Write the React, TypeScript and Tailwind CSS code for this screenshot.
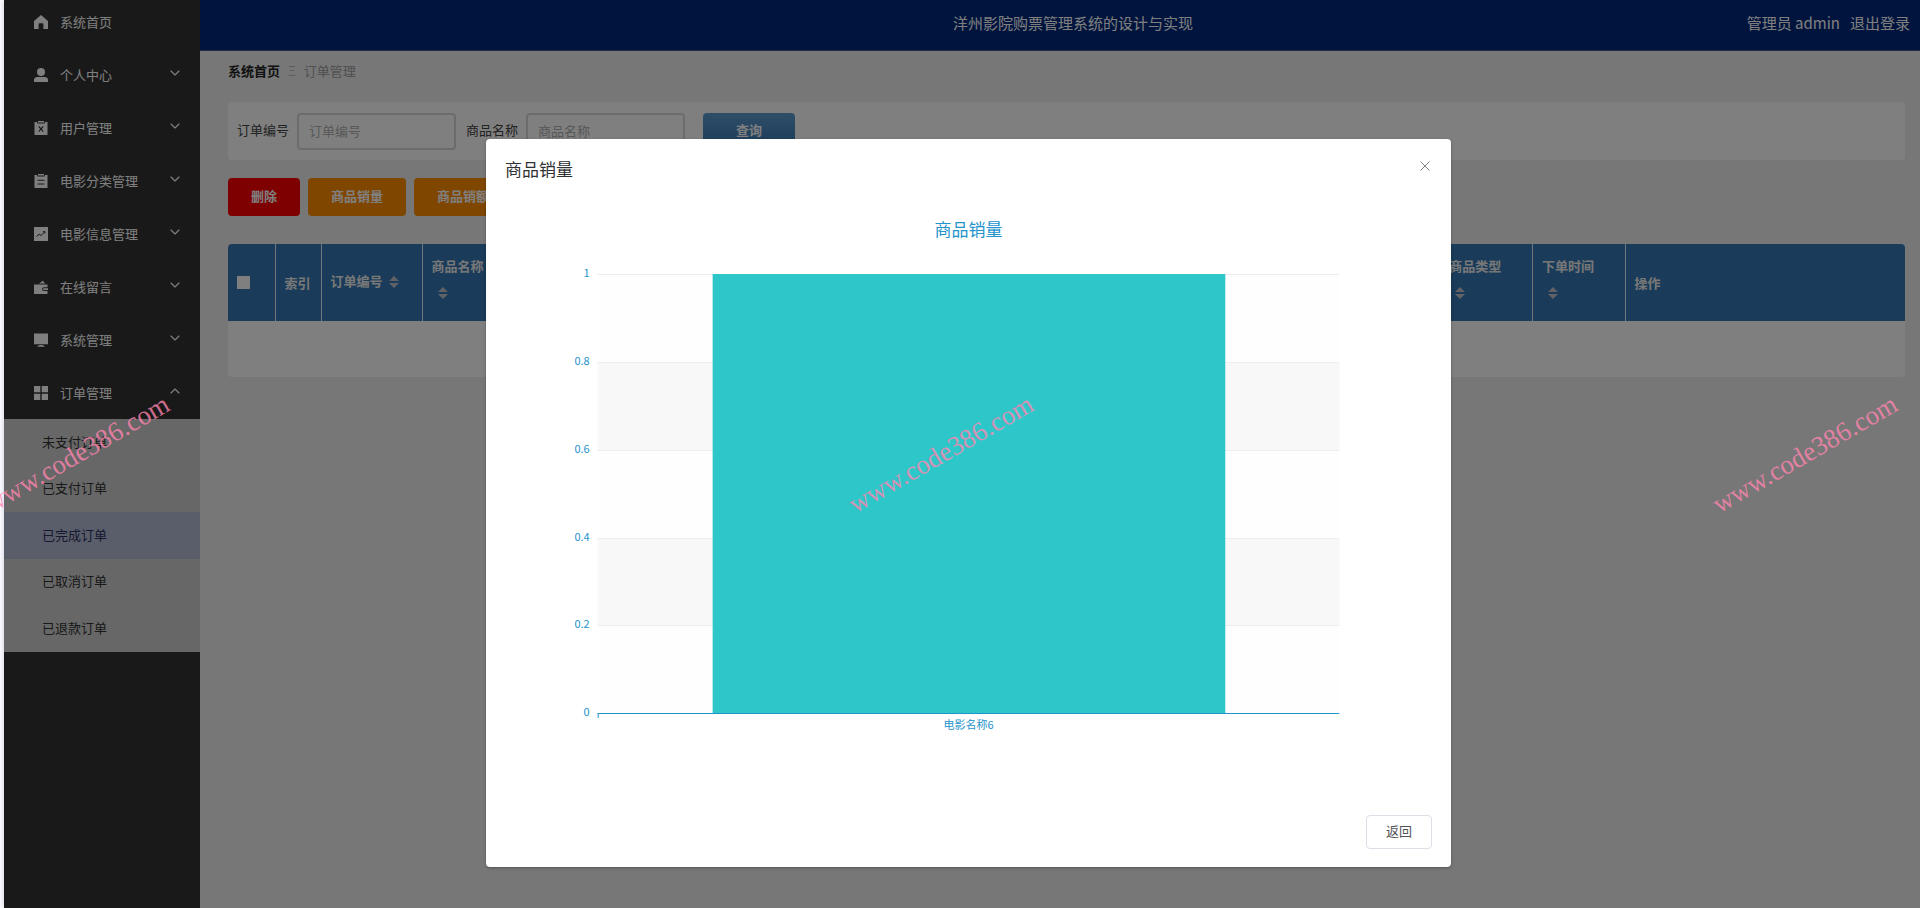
import React from "react";
import { ChevronDown, ChevronUp } from "lucide-react";

const icons = {
    home: <path d="M7 0 0 6v8h4.6V9.2a1 1 0 0 1 1-1h2.8a1 1 0 0 1 1 1V14H14V6z" />,
    user: (
        <>
            <circle cx="7" cy="4" r="4" />
            <path d="M0 14v-1.8C0 10.2 1.400 9 3.400 9h7.200c2 0 3.400 1.200 3.400 3.200V14z" />
        </>
    ),
    release: (
        <path
            fillRule="evenodd"
            d="M4 0h6v1.500H4zM.5 1h2.700v1.500h7.600V1h2.700v13H.5zM4.300 5.800 6.200 7.900 4.300 10.200l.8.7L7 8.700l1.900 2.200.8-.7-1.900-2.300 1.900-2.100-.8-.7L7 7.100 5.100 5.100z"
        />
    ),
    order: (
        <path
            fillRule="evenodd"
            d="M4 0h6v1.500H4zM.5 1h2.700v1.500h7.600V1h2.700v13H.5zM3.500 5.800v1h7v-1zM3.500 9.500v1h7v-1z"
        />
    ),
    marketing: (
        <>
            <path d="M0 0h14v14H0z" />
            <path d="m2.500 9.500 2.700-2.300 2 1.400L10.500 5M9 4.600h2v1.800" fill="none" stroke="#333333" />
        </>
    ),
    finance: (
        <path
            fillRule="evenodd"
            d="M5 3.500 8.800.8l2.500 2.700zM0 4.500h13.500v2.700H10a1.900 1.900 0 0 0 0 3.800h3.500V14H0zM10 8.200h4v1.900h-4a.9.9 0 0 1 0-1.900z"
        />
    ),
    platform: <path d="M0 .5h14v10.700H0zM5 11.900h4v.8h1.500v1h-7v-1H5z" />,
    menu: <path d="M0 0h6.300v6.300H0zM7.700 0H14v6.300H7.700zM0 7.700h6.300V14H0zM7.700 7.700H14V14H7.700z" />,
};

const menus = [
    { title: "个人中心", icon: icons.user },
    { title: "用户管理", icon: icons.release },
    { title: "电影分类管理", icon: icons.order },
    { title: "电影信息管理", icon: icons.marketing },
    { title: "在线留言", icon: icons.finance },
    { title: "系统管理", icon: icons.platform },
    { title: "订单管理", icon: icons.menu, open: true },
];

const orderMenus = ["未支付订单", "已支付订单", "已完成订单", "已取消订单", "已退款订单"];

const columns = [
    "商品名称",
    "商品图片",
    "购买数量",
    "商品价格",
    "折扣价格",
    "商品总价",
    "折扣总价",
    "支付类型",
    "收货地址",
    "联系电话",
    "收货人名",
    "商品类型",
    "下单时间",
];

const ticks = [
    { label: "1", y: 60 },
    { label: "0.8", y: 148 },
    { label: "0.6", y: 236 },
    { label: "0.4", y: 324 },
    { label: "0.2", y: 411 },
    { label: "0", y: 499 },
];

function MenuIcon({ children }: { children: React.ReactNode }) {
    return (
        <svg viewBox="0 0 14 14" className="w-3.5 h-3.5 shrink-0" fill="currentColor">
            {children}
        </svg>
    );
}

function SortCaret() {
    return (
        <span className="inline-flex w-[22px] h-[26px] items-center justify-center align-middle">
            <svg viewBox="0 0 10 12" className="w-2.5 h-3" fill="#c0c4cc">
                <path d="M5 0 10 5H0zM5 12 0 7h10z" />
            </svg>
        </span>
    );
}

function Sidebar() {
    return (
        <nav className="w-[196px] shrink-0 bg-[#333333] text-white shadow-[0_0_6px_rgba(80,90,160,0.35)]">
            <a href="#home" className="flex h-12 items-center gap-3 pb-1 pl-[30px]">
                <MenuIcon>{icons.home}</MenuIcon>
                系统首页
            </a>
            {menus.map((menu) => (
                <button key={menu.title} className="flex h-[53px] w-full items-center gap-3 pl-[30px] pr-[17px]">
                    <MenuIcon>{menu.icon}</MenuIcon>
                    <span className="flex-1 text-left">{menu.title}</span>
                    {menu.open ? (
                        <ChevronUp className="w-4 h-4 mb-1" strokeWidth={1.75} />
                    ) : (
                        <ChevronDown className="w-4 h-4 mb-1" strokeWidth={1.75} />
                    )}
                </button>
            ))}
            <div className="grid h-[233px] grid-rows-5 bg-[#cfcfcf] text-[#333333]">
                {orderMenus.map((title, i) => (
                    <a
                        key={title}
                        href="#orders"
                        className={`flex items-center pb-0.5 pl-[38px] ${i === 2 ? "bg-[#b4bad4] text-[#2a3260]" : ""}`}
                    >
                        {title}
                    </a>
                ))}
            </div>
        </nav>
    );
}

function SearchField({ id, label }: { id: string; label: string }) {
    return (
        <div className="flex items-center gap-2">
            <label htmlFor={id} className="pb-0.5">
                {label}
            </label>
            <input
                id={id}
                placeholder={label}
                className="h-[37px] w-[159px] rounded border-2 border-[#d8d8d8] bg-white px-2.5 pb-0.5 placeholder:text-[#b0b0b0]"
            />
        </div>
    );
}

function OrderTable() {
    return (
        <table className="mt-7 w-full table-fixed overflow-hidden rounded bg-white text-left">
            <colgroup>
                <col className="w-[47px]" />
                <col className="w-[46px]" />
                <col className="w-[101px]" />
                {columns.map((name) => (
                    <col key={name} />
                ))}
                <col className="w-[280px]" />
            </colgroup>
            <thead>
                <tr className="h-[77px] bg-[#3478b4] leading-[26px] text-[#f0f0f0] [&>th]:border-r [&>th]:border-[#e8eef4] [&>th]:px-[9px]">
                    <th>
                        <input
                            type="checkbox"
                            aria-label="全选"
                            className="block h-[13px] w-[13px] appearance-none bg-white"
                        />
                    </th>
                    <th>索引</th>
                    <th className="whitespace-nowrap pb-0.5">
                        订单编号
                        <SortCaret />
                    </th>
                    {columns.map((name) => (
                        <th key={name} className="pb-1.5">
                            {name}
                            <SortCaret />
                        </th>
                    ))}
                    <th className="!border-r-0">操作</th>
                </tr>
            </thead>
            <tbody>
                <tr className="h-14">
                    <td colSpan={17} />
                </tr>
            </tbody>
        </table>
    );
}

function SalesChart() {
    return (
        <svg className="block h-[560px] w-full" fill="#2493cb" fontSize="11" role="img" aria-label="商品销量">
            <text x="50%" y="22" fontSize="17" textAnchor="middle">
                商品销量
            </text>
            <rect x="10%" y="60" width="80%" height="439" fill="#fefefe" />
            <rect x="10%" y="148" width="80%" height="88" fill="#f8f8f8" />
            <rect x="10%" y="324" width="80%" height="88" fill="#f8f8f8" />
            {ticks.map((tick) => (
                <g key={tick.label}>
                    <rect x="10%" y={tick.y} width="80%" height="1" fill="#eeeeee" />
                    <svg x="10%" y={tick.y} overflow="visible">
                        <text x="-8" y="3" textAnchor="end">
                            {tick.label}
                        </text>
                    </svg>
                </g>
            ))}
            <rect x="22.4%" y="60" width="55.3%" height="439" fill="#2ec7c9" />
            <rect x="10%" y="499" width="80%" height="1" />
            <rect x="10%" y="499" width="1" height="5" />
            <text x="50%" y="515" textAnchor="middle">
                电影名称6
            </text>
        </svg>
    );
}

function SalesDialog() {
    return (
        <div className="absolute inset-y-0 left-1 right-0 flex items-start justify-center bg-black/50 pl-[13px]">
            <div
                role="dialog"
                aria-label="商品销量"
                className="mt-[139px] w-[965px] max-w-full rounded-sm bg-white px-[19px] pb-[18px] shadow-[0_1px_3px_rgba(0,0,0,0.3)]"
            >
                <div className="flex h-[75px] items-start justify-between pt-[18px]">
                    <h2 className="text-[17px] leading-6 text-[#303133]">商品销量</h2>
                    <button aria-label="关闭" className="mr-0.5 mt-1 text-[#808388]">
                        <svg viewBox="0 0 10 10" className="h-2.5 w-2.5" fill="none" stroke="currentColor">
                            <path d="m.5.5 9 9M9.500.5l-9 9" />
                        </svg>
                    </button>
                </div>
                <SalesChart />
                <div className="mt-[41px] flex justify-end">
                    <button className="h-[34px] rounded border border-[#dcdfe6] px-[19px] pb-0.5 text-[#505256]">
                        返回
                    </button>
                </div>
            </div>
        </div>
    );
}

function Watermark() {
    const mark =
        "absolute top-1/2 -translate-x-1/2 -translate-y-1/2 -rotate-[30deg] font-['Liberation_Serif',serif] text-[27px] text-[#ff85b0]/80";
    return (
        <div className="pointer-events-none absolute inset-0 overflow-hidden">
            <span className={`${mark} left-[4%]`}>www.code386.com</span>
            <span className={`${mark} left-[49%]`}>www.code386.com</span>
            <span className={`${mark} left-[94%]`}>www.code386.com</span>
        </div>
    );
}

export default function App() {
    return (
        <div className="relative flex min-h-screen overflow-hidden bg-white pl-1 font-['Noto_Sans_CJK_SC',sans-serif] text-[13px]">
            <Sidebar />
            <div className="min-w-0 flex-1 bg-[#eeeeee]">
                <header className="grid h-[51px] grid-cols-[1fr_auto_1fr] items-center border-b border-[#405890] bg-[#00287c] pb-1 pl-9 pr-2.5 text-[15px] text-white">
                    <h1 className="col-start-2">洋州影院购票管理系统的设计与实现</h1>
                    <div className="flex justify-end gap-2.5">
                        <span>管理员 admin</span>
                        <a href="#logout">退出登录</a>
                    </div>
                </header>
                <main className="pl-7 pr-[15px]">
                    <nav className="flex h-[51px] items-center gap-2 pb-3">
                        <a href="#home" className="font-bold text-[#222222]">
                            系统首页
                        </a>
                        <span className="text-[#b4b8c0]">Ξ</span>
                        <span className="text-[#a0a0a0]">订单管理</span>
                    </nav>
                    <form className="flex h-[58px] items-center gap-2.5 rounded bg-white px-[9px] text-[#444444]">
                        <SearchField id="orderid" label="订单编号" />
                        <SearchField id="goodname" label="商品名称" />
                        <button
                            type="button"
                            className="ml-2 h-[37px] w-[92px] rounded bg-linear-to-b from-[#5c9cd0] to-[#3474b0] pb-0.5 font-bold text-white"
                        >
                            查询
                        </button>
                    </form>
                    <div className="mt-[18px] flex gap-2 font-bold text-white">
                        <button className="h-[38px] rounded bg-[#ff0000] px-[23px] pb-0.5">删除</button>
                        <button className="h-[38px] rounded bg-[#ff8c00] px-[23px] pb-0.5">商品销量</button>
                        <button className="h-[38px] rounded bg-[#ff8c00] px-[23px] pb-0.5">商品销额</button>
                    </div>
                    <OrderTable />
                </main>
            </div>
            <SalesDialog />
            <Watermark />
        </div>
    );
}
